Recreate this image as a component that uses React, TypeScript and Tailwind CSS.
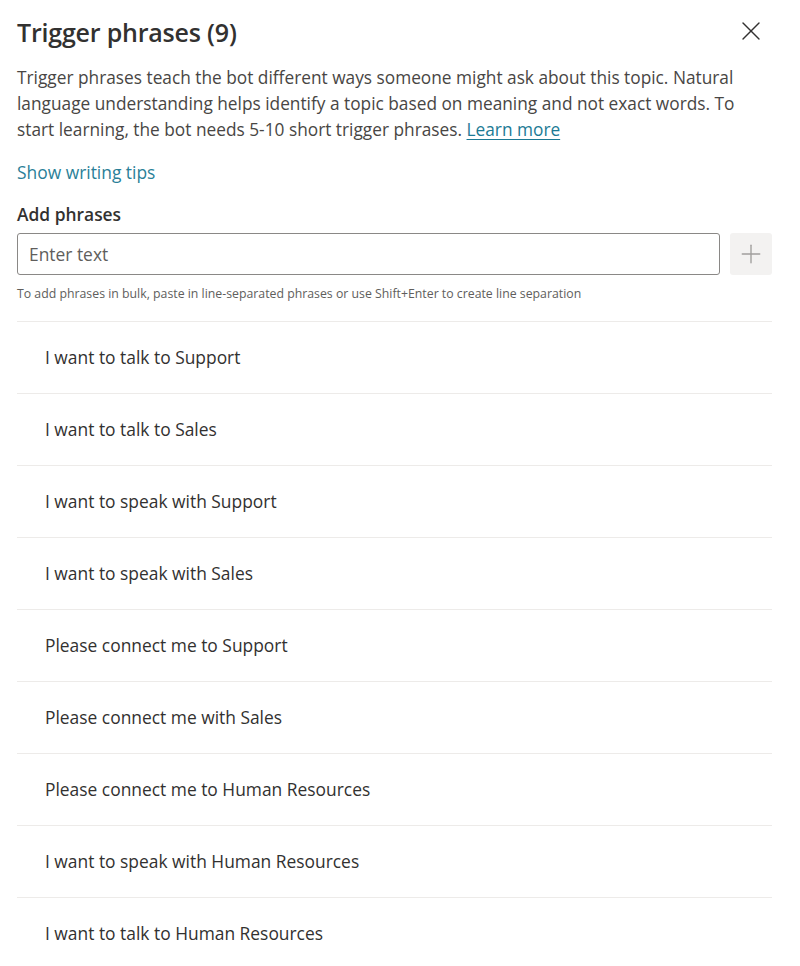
import { Plus, X } from 'lucide-react';

const PHRASES = [
    'I want to talk to Support',
    'I want to talk to Sales',
    'I want to speak with Support',
    'I want to speak with Sales',
    'Please connect me to Support',
    'Please connect me with Sales',
    'Please connect me to Human Resources',
    'I want to speak with Human Resources',
    'I want to talk to Human Resources',
];

export default function App() {
    return (
        <div
            className="w-[800px] h-[966px] overflow-hidden bg-white text-[#323130] pl-[17px] pr-[28px]"
            style={{ fontFamily: '"Open Sans", "Noto Sans", sans-serif' }}
        >
            {/* Header */}
            <div className="flex items-center justify-between pt-[14px] h-[50px]">
                <h2 className="text-[25px] font-semibold leading-[34px] tracking-[-0.2px]">Trigger phrases (9)</h2>
                <button className="text-[#323130] mr-[5px] -mt-[3px]">
                    <X className="w-8 h-8" strokeWidth={1} />
                </button>
            </div>

            <p className="mt-[15px] text-[17.3px] leading-[26px] text-[#484644]">
                Trigger phrases teach the bot different ways someone might ask about this topic. Natural language
                understanding helps identify a topic based on meaning and not exact words. To start learning, the bot
                needs 5-10 short trigger phrases.{' '}
                <a className="text-[#1c7a95] underline underline-offset-[3px]">Learn more</a>
            </p>

            <div className="mt-[16px] text-[17.4px] leading-[26px] text-[#2a7f98]">Show writing tips</div>

            <div className="mt-[16px] text-[17.4px] leading-[26px] font-semibold">Add phrases</div>

            <div className="mt-[6px] flex gap-[10px]">
                <div className="flex-1 h-[42px] border border-[#8a8886] rounded-[3px] flex items-center px-[11px]">
                    <span className="text-[17.4px] text-[#605e5c]">Enter text</span>
                </div>
                <button className="w-[42px] h-[42px] bg-[#f3f2f1] rounded-[3px] flex items-center justify-center text-[#a19f9d]">
                    <Plus className="w-[30px] h-[30px]" strokeWidth={1.1} />
                </button>
            </div>

            <div className="mt-[10px] text-[12.3px] leading-[18px] text-[#605e5c]">
                To add phrases in bulk, paste in line-separated phrases or use Shift+Enter to create line separation
            </div>

            <ul className="mt-[18px] border-t border-[#edebe9]">
                {PHRASES.map((p) => (
                    <li
                        key={p}
                        className="h-[72px] border-b border-[#edebe9] flex items-center pl-[28px] text-[17.4px] text-[#323130]"
                    >
                        {p}
                    </li>
                ))}
            </ul>
        </div>
    );
}
